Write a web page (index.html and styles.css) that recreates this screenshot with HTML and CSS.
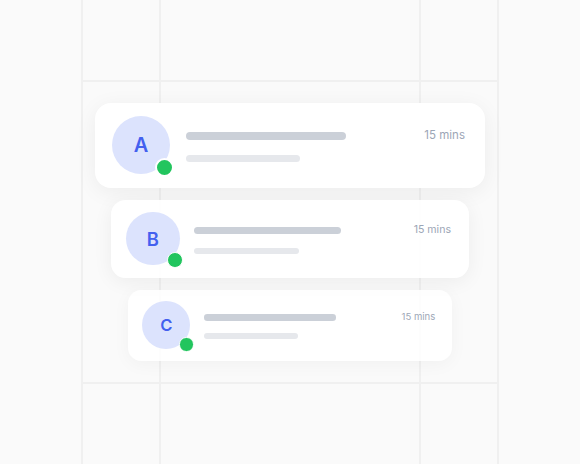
FILE: index.html
```html
<!DOCTYPE html>
<html>
<head>
  <title>Notifications</title>
  <link rel="stylesheet" href="styles.css">
</head>
<body>
  <div class="stage">
    <div class="stack">
      <div class="card card-front">
        <div class="avatar">A<span class="status"></span></div>
        <div class="lines">
          <div class="bar bar-title"></div>
          <div class="bar bar-sub"></div>
        </div>
        <div class="time">15 mins</div>
      </div>

      <div class="card card-middle">
        <div class="avatar">B<span class="status"></span></div>
        <div class="lines">
          <div class="bar bar-title"></div>
          <div class="bar bar-sub"></div>
        </div>
        <div class="time">15 mins</div>
      </div>

      <div class="card card-back">
        <div class="avatar">C<span class="status"></span></div>
        <div class="lines">
          <div class="bar bar-title"></div>
          <div class="bar bar-sub"></div>
        </div>
        <div class="time">15 mins</div>
      </div>
    </div>
  </div>
</body>
</html>
```
FILE: styles.css
```css
body {
  margin: 0;
  font-family: Inter, "Noto Sans", sans-serif;
  background-color: #fafafa;
}

.stage {
  width: 580px;
  height: 464px;
  overflow: hidden;
  background-color: #fafafa;
  background-image:
    linear-gradient(#f0f0f0, #f0f0f0),
    linear-gradient(#f0f0f0, #f0f0f0),
    linear-gradient(#f0f0f0, #f0f0f0),
    linear-gradient(#f0f0f0, #f0f0f0),
    linear-gradient(#f0f0f0, #f0f0f0),
    linear-gradient(#f0f0f0, #f0f0f0);
  background-repeat: no-repeat;
  background-size:
    2px 100%,
    2px 100%,
    2px 100%,
    2px 100%,
    418px 2px,
    418px 2px;
  background-position:
    81px 0,
    159px 0,
    419px 0,
    497px 0,
    81px 80px,
    81px 382px;
}

.stack {
  display: flex;
  flex-direction: column;
  align-items: center;
  gap: 12px;
  padding-top: 103px;
}

.card {
  width: 390px;
  box-sizing: border-box;
  display: flex;
  align-items: flex-start;
  padding: 13px 20px 14px 17px;
  background-color: #fff;
  border-radius: 16px;
  box-shadow: 0 4px 22px rgba(0, 0, 0, 0.06);
}

.card-middle {
  zoom: 0.92;
  background-color: rgba(255, 255, 255, 0.9);
}

.card-back {
  zoom: 0.83;
  background-color: rgba(255, 255, 255, 0.86);
  box-shadow: 0 4px 22px rgba(0, 0, 0, 0.04);
}

.avatar {
  position: relative;
  width: 58px;
  height: 58px;
  flex-shrink: 0;
  border-radius: 50%;
  background-color: #dce3fd;
  color: #4360ef;
  font-size: 20px;
  font-weight: 600;
  display: flex;
  align-items: center;
  justify-content: center;
}

.status {
  position: absolute;
  right: -4px;
  bottom: -3px;
  width: 15px;
  height: 15px;
  border-radius: 50%;
  background-color: #22c55e;
  border: 2px solid #fff;
}

.lines {
  flex: 1;
  display: flex;
  flex-direction: column;
  gap: 15px;
  margin: 16px 0 0 16px;
}

.bar {
  border-radius: 4px;
}

.bar-title {
  width: 160px;
  height: 8px;
  background-color: #cbd0d8;
}

.bar-sub {
  width: 114px;
  height: 7px;
  background-color: #e6e8ec;
}

.time {
  margin-top: 12px;
  font-size: 11.5px;
  line-height: 15px;
  color: #9ca6b6;
}
```
